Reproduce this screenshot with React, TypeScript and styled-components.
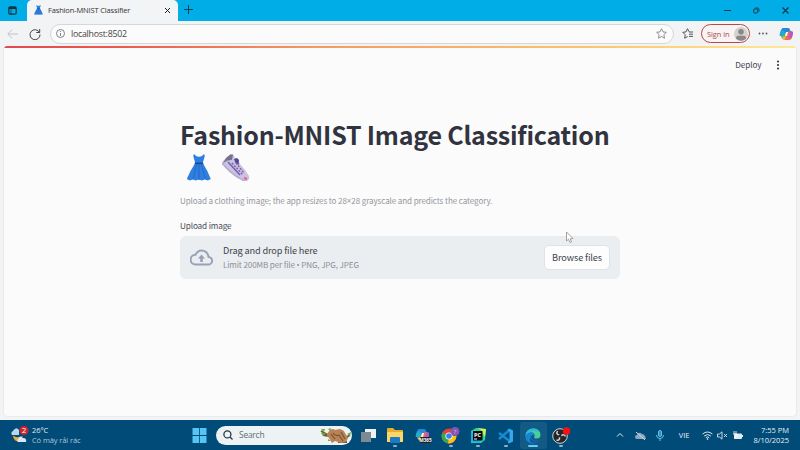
import React from 'react';
import styled, { createGlobalStyle } from 'styled-components';

const Global = createGlobalStyle`
  * { box-sizing: border-box; }
  body { margin: 0; overflow: hidden; }
`;

const source = `"Noto Sans CJK SC", "Noto Sans", sans-serif`;
const segoe = `"Open Sans", "Noto Sans", sans-serif`;

const Screen = styled.div`
  width: 800px;
  height: 450px;
  display: flex;
  flex-direction: column;
  background: #f1f3f5;
  font-family: ${segoe};
  overflow: hidden;
`;

const Text = styled.span<{ $size: number; $color?: string; $track?: number; $lh?: number }>`
  font-size: ${p => p.$size}px;
  line-height: ${p => p.$lh ?? 12}px;
  color: ${p => p.$color ?? '#333'};
  letter-spacing: ${p => p.$track ?? 0}px;
  white-space: nowrap;
`;

const Symbol = styled.span`
  font-family: "Open Sans", sans-serif;
  line-height: 1;
`;

const TitleBar = styled.header`
  height: 21px;
  flex: none;
  display: flex;
  background: #00ade6;
`;

const Workspaces = styled.div`
  width: 27px;
  padding: 6px 0 0 8px;
  line-height: 0;
`;

const Tab = styled.div`
  width: 151px;
  height: 21px;
  display: flex;
  align-items: center;
  padding: 0 7px 1px 7px;
  background: #f3f4f6;
  border-radius: 5px 5px 0 0;
`;

const TabTitle = styled(Text)`
  margin-left: 5px;
  flex: 1;
`;

const NewTab = styled.div`
  padding: 5px 0 0 6px;
  flex: 1;
  line-height: 0;
`;

const WindowButtons = styled.div`
  display: flex;
  align-items: center;
  gap: 22px;
  padding-right: 11px;
`;

const Toolbar = styled.div`
  height: 25px;
  flex: none;
  display: flex;
  align-items: center;
  padding: 0 6px 0 7px;
`;

const NavButtons = styled.div`
  display: flex;
  align-items: center;
  gap: 11px;
  width: 43px;
  flex: none;
`;

const Address = styled.div`
  width: 624px;
  flex: none;
  height: 20px;
  display: flex;
  align-items: center;
  padding: 0 6px 0 5px;
  border: 1px solid #d5d7d9;
  border-radius: 10px;
  background: #fbfbfb;
`;

const Url = styled(Text)`
  margin-left: 6px;
  flex: 1;
`;

const ToolbarRight = styled.div`
  flex: 1;
  display: flex;
  align-items: center;
  padding-left: 8px;
`;

const SignIn = styled.div`
  width: 49px;
  flex: none;
  height: 19px;
  margin: 0 8px 0 7px;
  padding: 0 1px 0 5px;
  display: flex;
  align-items: center;
  justify-content: space-between;
  border: 1px solid #b5484c;
  border-radius: 10px;
  background: #f9f3f3;
`;

const CopilotSlot = styled.div`
  margin-left: 11px;
  line-height: 0;
`;

const Page = styled.main`
  height: 371px;
  flex: none;
  margin: 0 3px;
  background: #fbfbfb;
  border: 1px solid #e9eaec;
  border-top: 0;
  border-radius: 4px 4px 5px 5px;
  overflow: hidden;
  font-family: ${source};
`;

const Decoration = styled.div`
  height: 1.5px;
  background: linear-gradient(90deg, #e04a4f 0%, #ec5a50 15%, #f59a62 40%, #fbc66f 75%, #fde998 100%);
`;

const AppHeader = styled.div`
  display: flex;
  justify-content: flex-end;
  align-items: center;
  gap: 14px;
  height: 34px;
  padding-right: 16.5px;
`;

const DeployLabel = styled(Text)`
  padding-bottom: 2px;
`;

const Block = styled.section`
  width: 440px;
  margin: 35px 0 0 176px;
  display: flex;
  flex-direction: column;
`;

const Heading = styled.h1`
  margin: 0;
  font-size: 25px;
  line-height: 34px;
  font-weight: 700;
  letter-spacing: -0.22px;
  color: #31333f;
  white-space: nowrap;
`;

const EmojiRow = styled.div`
  height: 33px;
  display: flex;
  align-items: center;
  gap: 10px;
  padding-left: 6px;
`;

const Caption = styled(Text)`
  margin-top: 11px;
`;

const Label = styled(Text)`
  margin-top: 12px;
`;

const Dropzone = styled.div`
  height: 43px;
  margin-top: 5px;
  display: flex;
  align-items: center;
  padding: 0 10px;
  border-radius: 6px;
  background: #ebeef1;
`;

const Instructions = styled.div`
  flex: 1;
  display: flex;
  flex-direction: column;
  gap: 1px;
  margin-left: 10px;
`;

const Browse = styled.button`
  width: 66px;
  height: 25px;
  padding: 0 0 1px;
  display: flex;
  align-items: center;
  justify-content: center;
  border: 1px solid #e0e2e5;
  border-radius: 5px;
  background: #fdfdfd;
  font-family: inherit;
`;

const Pointer = styled.svg`
  position: absolute;
  left: 565px;
  top: 231px;
`;

const Taskbar = styled.footer`
  height: 30px;
  flex: none;
  margin-top: 3px;
  display: flex;
  align-items: center;
  padding: 0 11px;
  background: #004b77;
`;

const Weather = styled.div`
  width: 180px;
  display: flex;
  align-items: center;
  gap: 3px;
`;

const Stack = styled.div<{ $right?: boolean }>`
  display: flex;
  flex-direction: column;
  align-items: ${p => (p.$right ? 'flex-end' : 'flex-start')};
`;

const Search = styled.div`
  width: 136px;
  height: 19px;
  margin: 0 2px 0 8px;
  padding-left: 7px;
  display: flex;
  align-items: center;
  border-radius: 10px;
  background: #edf2f5;
`;

const SearchText = styled(Text)`
  margin-left: 6px;
  flex: 1;
`;

const Pins = styled.div`
  display: flex;
  align-items: center;
`;

const Pin = styled.div<{ $run?: boolean; $active?: boolean }>`
  width: 27.6px;
  height: 27px;
  padding-top: 5px;
  display: flex;
  flex-direction: column;
  align-items: center;
  gap: 0;
  border-radius: 3px;
  background: ${p => (p.$active ? '#135b84' : 'transparent')};
  &::after {
    content: '';
    width: ${p => (p.$active ? 10 : 4)}px;
    height: 2px;
    border-radius: 1px;
    background: ${p => (p.$active ? '#62cdf5' : p.$run ? '#8eb2c8' : 'transparent')};
  }
`;

const Tray = styled.div`
  flex: 1;
  display: flex;
  align-items: center;
  justify-content: flex-end;
`;

const TrayItem = styled.div<{ $gap: number }>`
  margin-right: ${p => p.$gap}px;
  line-height: 0;
`;

const Dress = ({ w, h }: { w: number; h: number }) => (
  <svg width={w} height={h} viewBox="0 0 24 27">
    <path d="M7 0l1.500 1.500Q12 4 15.500 1.500L17 0l.8 2-2 7q5 8 8 16l-3 1.500-3-1-3 1-3-1-3 1-3-1-3 1-3-1.500Q3 17 8.200 9L6.200 2z" fill="#2f7fe0" />
    <path d="M9.500 11L6 25M12 11v15M14.500 11l4 14" stroke="#226bc8" strokeWidth="1" fill="none" />
    <path d="M8 8.500h8l.5 1.800H7.500z" fill="#174a98" />
  </svg>
);

const Shoe = () => (
  <svg width="28" height="27" viewBox="0 0 28 27">
    <path d="M0 8L5 3l6-3 2 4 3 1 2 5 5 6 4 6q1 3-2 5-4 0-9-4L3 13z" fill="#cbc2df" />
    <path d="M4 4L8.500 .3l2.500 .5-1 5-5 1-4 2.500z" fill="#77728a" />
    <path d="M12 5l3-1 2 2-.5 5-3-2z" fill="#4f479c" />
    <path d="M10 9l11 12M14 9l8 10" stroke="#8760b5" strokeWidth="1.500" strokeDasharray="2 1.300" />
    <path d="M6 8l12 13" stroke="#6f63b4" strokeWidth="1.600" />
    <path d="M0 9q7 9 17 15 6 4 8 3" stroke="#b5a8ca" strokeWidth="1.500" fill="none" />
    <path d="M22 24l3 1" stroke="#df5da5" strokeWidth="2" />
  </svg>
);

const Copilot = () => (
  <svg width="15" height="14" viewBox="0 0 15 14">
    <path d="M4 1h5q2 0 2 2l1 2H8L5 9H1Q0 8 1 6l1-3q1-2 2-2z" fill="#2488dc" />
    <path d="M3 5L2 10q1 2 4 2l2-5z" fill="#43b96c" />
    <path d="M1 6l2-3 3 1-2 5H1z" fill="#24a8d8" />
    <path d="M11 4q3 0 3 2l-1 5q-1 2-3 2H6q-2 0-3-2h3l2-6z" fill="#ee6a54" />
    <path d="M11 4q3 0 3 2l-1 4-4 1 2-5z" fill="#b455d8" />
    <path d="M3 10l4-1-1 4-2-1z" fill="#f1b83c" />
    <path d="M7 5h2L8 9H6z" fill="#f4f5fa" />
  </svg>
);

const App = () => (
  <Screen>
    <Global />
    <TitleBar>
      <Workspaces>
        <svg width="9" height="9" viewBox="0 0 9 9" fill="none" stroke="#12313f">
          <rect x=".8" y=".8" width="7.400" height="7.400" rx="1.500" strokeWidth="1.200" />
          <path d="M1 2h7" strokeWidth="2" /><path d="M3 3v5" strokeWidth=".7" />
        </svg>
      </Workspaces>
      <Tab>
        <Dress w={9} h={10} />
        <TabTitle $size={7.5} $track={-0.15} $color="#333" $lh={12}>Fashion-MNIST Classifier</TabTitle>
        <svg width="7" height="7" viewBox="0 0 7 7"><path d="M1 1l5 5M6 1L1 6" stroke="#222" strokeWidth="1" /></svg>
      </Tab>
      <NewTab>
        <svg width="9" height="9" viewBox="0 0 9 9"><path d="M4.500 0v9M0 4.500h9" stroke="#0d4055" /></svg>
      </NewTab>
      <WindowButtons>
        <svg width="7" height="7"><path d="M0 3.500h7" stroke="#123a4b" /></svg>
        <svg width="7" height="7" fill="none" stroke="#123a4b"><rect x=".7" y="2" width="4" height="4" rx="1" /><path d="M2.500 1h2q1.500 0 1.500 1.500v2" /></svg>
        <svg width="7" height="7"><path d="M.5 .5l6 6M6.500 .5l-6 6" stroke="#123a4b" strokeWidth="1.200" /></svg>
      </WindowButtons>
    </TitleBar>
    <Toolbar>
      <NavButtons>
        <svg width="11" height="10" fill="none" stroke="#c1c3c5"><path d="M11 5H1M5 .7L.8 5 5 9.300" /></svg>
        <svg width="12" height="12" viewBox="0 0 12 12" fill="none" stroke="#444"><path d="M10.500 4.500A5 5 0 1 0 11 6.500M10.700 1v3.500H7.300" /></svg>
      </NavButtons>
      <Address>
        <svg width="9" height="9" viewBox="0 0 9 9" fill="none" stroke="#666" strokeWidth=".8"><circle cx="4.500" cy="4.500" r="4" /><path d="M4.500 4v3M4.500 2v1" /></svg>
        <Url $size={8.8} $track={-0.25} $color="#444">localhost:8502</Url>
        <svg width="11" height="11" viewBox="0 0 11 11" fill="none" stroke="#777" strokeWidth=".8"><path d="M5.500 .7L7 3.900l3.400.4-2.500 2.400.6 3.500-3-1.700-3 1.700.6-3.500L.6 4.300 4 3.900z" /></svg>
      </Address>
      <ToolbarRight>
        <svg width="12" height="11" viewBox="0 0 12 11" fill="none" stroke="#444" strokeWidth=".9"><path d="M7 3.700L5.500 .7 4 3.900.8 4.300l2.400 2.400-.5 3.500 3-1.700M7 4h4M7 6.200h4M7 8.400h4" /></svg>
        <SignIn>
          <Text $size={7.4} $track={-0.05} $color="#a84c4e">Sign in</Text>
          <svg width="14" height="14" viewBox="0 0 14 14"><circle cx="7" cy="7" r="7" fill="#d4d2d0" /><circle cx="7" cy="4.800" r="2.800" fill="#8a8886" /><path d="M2 11.800Q2 8.800 4 8.800h6q2 0 2 3-5 4-10 0z" fill="#8a8886" /></svg>
        </SignIn>
        <svg width="10" height="3" fill="#555"><circle cx="1.500" cy="1.500" r=".9" /><circle cx="5" cy="1.500" r=".9" /><circle cx="8.500" cy="1.500" r=".9" /></svg>
        <CopilotSlot><Copilot /></CopilotSlot>
      </ToolbarRight>
    </Toolbar>
    <Page>
      <Decoration />
      <AppHeader>
        <DeployLabel $size={8.2} $track={-0.1} $color="#444650">Deploy</DeployLabel>
        <svg width="4" height="10" fill="#383a43"><circle cx="2" cy="1.500" r="1.100" /><circle cx="2" cy="5" r="1.100" /><circle cx="2" cy="8.500" r="1.100" /></svg>
      </AppHeader>
      <Block>
        <Heading>Fashion-MNIST Image Classification</Heading>
        <EmojiRow><Dress w={26} h={27} /><Shoe /></EmojiRow>
        <Caption $size={8.1} $track={-0.12} $color="#96989d">Upload a clothing image; the app resizes to 28<Symbol>×</Symbol>28 grayscale and predicts the category.</Caption>
        <Label $size={8.2} $track={-0.14} $color="#4a4c55">Upload image</Label>
        <Dropzone>
          <svg width="23" height="17" viewBox="0 0 23 17" fill="none" stroke="#98a1b5" strokeWidth="2"><path d="M5.500 15.500H18a3.800 3.800 0 0 0 .5-7.600Q17.500 1.500 11.500 1.500 7.500 1.500 5.500 5.700A4.900 4.900 0 0 0 5.500 15.500z" /><path d="M8 9.500h7L11.500 5.500z" fill="#98a1b5" stroke="none" /><path d="M11.500 13V8" strokeWidth="2.600" /></svg>
          <Instructions>
            <Text $size={9.2} $track={-0.13} $color="#42444e" $lh={14}>Drag and drop file here</Text>
            <Text $size={8.1} $track={-0.13} $color="#8b8e96" $lh={14}>Limit 200MB per file <Symbol>•</Symbol> PNG, JPG, JPEG</Text>
          </Instructions>
          <Browse><Text $size={9.2} $track={-0.12} $color="#42444e">Browse files</Text></Browse>
        </Dropzone>
      </Block>
    </Page>
    <Pointer width="9" height="13" viewBox="0 0 9 13"><path d="M1.500 1v9l2-1.800L5 11.500l1.500-.6L5.200 7.800l2.800-.3z" fill="#fff" stroke="#8b8b8b" strokeWidth=".8" /></Pointer>
    <Taskbar>
      <Weather>
        <svg width="18" height="20" viewBox="0 0 18 20">
          <path d="M1 10a2.500 2.500 0 0 1 1-4Q5 1 8 5v5z" fill="#b9d5ee" />
          <path d="M2 10.500q0 6 8 6.500l-1-3 3-3-4 1q-3 1-6-1.500z" fill="#f1a83b" />
          <path d="M7 17a2 2 0 0 1 0-3q2-4 5-1 4 0 3 4z" fill="#d9e8f5" />
          <circle cx="13" cy="5.500" r="4.600" fill="#c8262d" />
          <text x="13" y="8.400" fontSize="8" fill="#fff" textAnchor="middle">2</text>
        </svg>
        <Stack>
          <Text $size={7.5} $track={-0.1} $color="#e2edf4" $lh={10}>26°C</Text>
          <Text $size={7.5} $track={-0.1} $color="#a9c6d8" $lh={10}>Có mây rải rác</Text>
        </Stack>
      </Weather>
      <svg width="17" height="15" viewBox="0 0 17 15" fill="#55c5f4"><path d="M1.500 0h6.600v7H1.500zM8.900 0h6.600v7H8.900zM1.500 8h6.600v7H1.500zM8.900 8h6.600v7H8.900z" /></svg>
      <Search>
        <svg width="10" height="10" viewBox="0 0 10 10" fill="none" stroke="#26343d" strokeWidth="1.300"><circle cx="4.400" cy="4.400" r="3.500" /><path d="M7 7l2.500 2.500" /></svg>
        <SearchText $size={8.4} $track={-0.2} $color="#646b70">Search</SearchText>
        <svg width="32" height="17" viewBox="0 0 32 17">
          <path d="M1 4l7 4 6 5M3 8l6 1M21 14l9-6M18 15h9" stroke="#695b2f" strokeWidth="1.800" fill="none" />
          <path d="M7 7l3-4q3-2 5 0l5-1q4 1 5 4l3 5-2 4-5 1-6-2-3 2-3-5-2-2z" fill="#b98355" />
          <path d="M13 6q3 4 6 2l4 6M11 7l4 5M21 5l4 7" stroke="#79513a" strokeWidth="1.200" fill="none" />
          <path d="M1 2l4 0-1 3zM1 6l5 0-3 3zM8 2l3-1-1 3zM27 7l4-2-1 4zM8 12l3 2-3 0z" fill="#6fa944" />
        </svg>
      </Search>
      <Pins>
        <Pin><svg width="18" height="18"><rect x="6" y="2" width="11" height="9" fill="#eef1f3" /><rect x="2" y="5" width="10" height="10" fill="#7e8a92" /></svg></Pin>
        <Pin $run><svg width="18" height="18"><path d="M1 2q0-1 1-1h5l2 2h7q1 0 1 1v11H1z" fill="#e7ad2d" /><path d="M1 5h16v10H1z" fill="#fbd665" /><path d="M4 16v-5q0-1 1-1h8q1 0 1 1v5z" fill="#1d79c5" /></svg></Pin>
        <Pin>
          <svg width="18" height="18"><svg x="1" y="1" width="15" height="14"><Copilot /></svg><rect x="6" y="10" width="11" height="6" rx="1" fill="#222" /><text x="11.500" y="15" fontSize="4.500" fontWeight="700" fill="#fff" textAnchor="middle">M365</text></svg>
        </Pin>
        <Pin $run>
          <svg width="19" height="18"><circle cx="8" cy="9" r="7.500" fill="#e44134" /><path d="M8 9L1.400 5.500A7.500 7.500 0 0 0 7 16.400z" fill="#35a853" /><path d="M8 9h7.500A7.500 7.500 0 0 1 7 16.400z" fill="#fbc116" /><circle cx="8" cy="9" r="3.600" fill="#fff" /><circle cx="8" cy="9" r="2.800" fill="#3d7fe8" /><circle cx="14" cy="4.500" r="4.500" fill="#8756b0" /><text x="14" y="7" fontSize="6" fill="#d8c4ea" textAnchor="middle">?</text></svg>
        </Pin>
        <Pin $run><svg width="18" height="18"><path d="M2 4l5-3 10 1-1 11-4 3H2z" fill="#28d5a2" /><path d="M8 1l9 1-1 8-4-7z" fill="#d8ec51" /><path d="M2 5v10l8 1 2-3z" fill="#21aee4" /><rect x="4" y="4" width="9.500" height="9.500" fill="#090909" /><text x="5" y="9.500" fontSize="5.500" fontWeight="700" fill="#fff">PC</text><path d="M5 12h3" stroke="#fff" /></svg></Pin>
        <Pin $run><svg width="18" height="18"><path d="M2 6l10.500 8M2 12l10.500-9" stroke="#168bd1" strokeWidth="2.400" /><path d="M12 1.500l4 2v11l-4 2-1.500-1.500 2-1.500V4.500l-2-1.500z" fill="#35a9ee" /></svg></Pin>
        <Pin $run $active>
          <svg width="18" height="18"><path d="M1.500 9Q2 1.500 9.500 1.500q7 .5 7 6.500 0 3.500-4 3.500-3 0-2-2Q11 5 6.500 5.500 3 6 1.500 9z" fill="#46cf9b" /><path d="M1.500 9Q2 1.500 9.500 1.500q4 0 6 4Q9 2 5 6z" fill="#2bb9df" /><path d="M1.500 9Q3 5 7.500 5.500 11 6 10.500 9 8 7 7 9.500q0 5 8 4-5 5-10 2-4-2-3.500-6.500z" fill="#1686d4" /><path d="M7 9.500q-1 5 8 4-4 4-8 2-2.500-2 0-6z" fill="#1357a6" /></svg>
        </Pin>
        <Pin $run>
          <svg width="20" height="18"><circle cx="9" cy="9" r="7.300" fill="#24272a" stroke="#ced4d8" /><path d="M8.500 8Q4.500 7.500 6.500 4M10 9q3-2.500 4.500 .5M8.500 10Q9 14 5.500 13" stroke="#d5dadd" strokeWidth="1.500" fill="none" /><circle cx="9" cy="9" r="1.500" fill="#24272a" /><circle cx="15.500" cy="4" r="3.700" fill="#fa1012" /></svg>
        </Pin>
      </Pins>
      <Tray>
        <TrayItem $gap={11}><svg width="8" height="6" fill="none" stroke="#e6eff5"><path d="M1 4.500L4 1.500l3 3" /></svg></TrayItem>
        <TrayItem $gap={10}><svg width="11" height="9"><path d="M2 8a2 2 0 0 1 0-4q2-4 5-1 3 0 4 5z" fill="#8ca9bb" /><path d="M1 1l9 8" stroke="#d1dee6" /></svg></TrayItem>
        <TrayItem $gap={15}><svg width="8" height="11" fill="none" stroke="#62c2ec"><rect x="2.500" y=".5" width="3" height="6" rx="1.500" fill="#398db5" /><path d="M.5 5q0 3.500 3.500 3.500T7.500 5M4 8.500V11" /></svg></TrayItem>
        <TrayItem $gap={13}><Text $size={7.5} $color="#e6eff5">VIE</Text></TrayItem>
        <TrayItem $gap={4}><svg width="11" height="9" viewBox="0 0 11 9" fill="none" stroke="#dce8ef"><path d="M.6 3Q5.500-1 10.400 3M2.200 5Q5.500 2 8.800 5M3.800 6.700Q5.500 5 7.200 6.700" /><circle cx="5.500" cy="8" r=".5" /></svg></TrayItem>
        <TrayItem $gap={5}><svg width="11" height="9" fill="none" stroke="#dce8ef" strokeWidth=".9"><path d="M.5 3h2L5 .8v7.400L2.500 6h-2zM7 3l3 3M10 3L7 6" /></svg></TrayItem>
        <TrayItem $gap={10}><svg width="10" height="9"><rect x="1" y="2.500" width="8" height="5.500" rx="1" fill="#e2ebf1" /><path d="M9 4h1v2H9z" fill="#e2ebf1" /><path d="M1 0v3M3 0v3M0 3h4v2H2v3" stroke="#fff" strokeWidth=".8" fill="none" /></svg></TrayItem>
        <Stack $right>
          <Text $size={7.5} $color="#e6eff5" $lh={10}>7:55 PM</Text>
          <Text $size={7.5} $color="#e6eff5" $lh={10}>8/10/2025</Text>
        </Stack>
      </Tray>
    </Taskbar>
  </Screen>
);

export default App;
